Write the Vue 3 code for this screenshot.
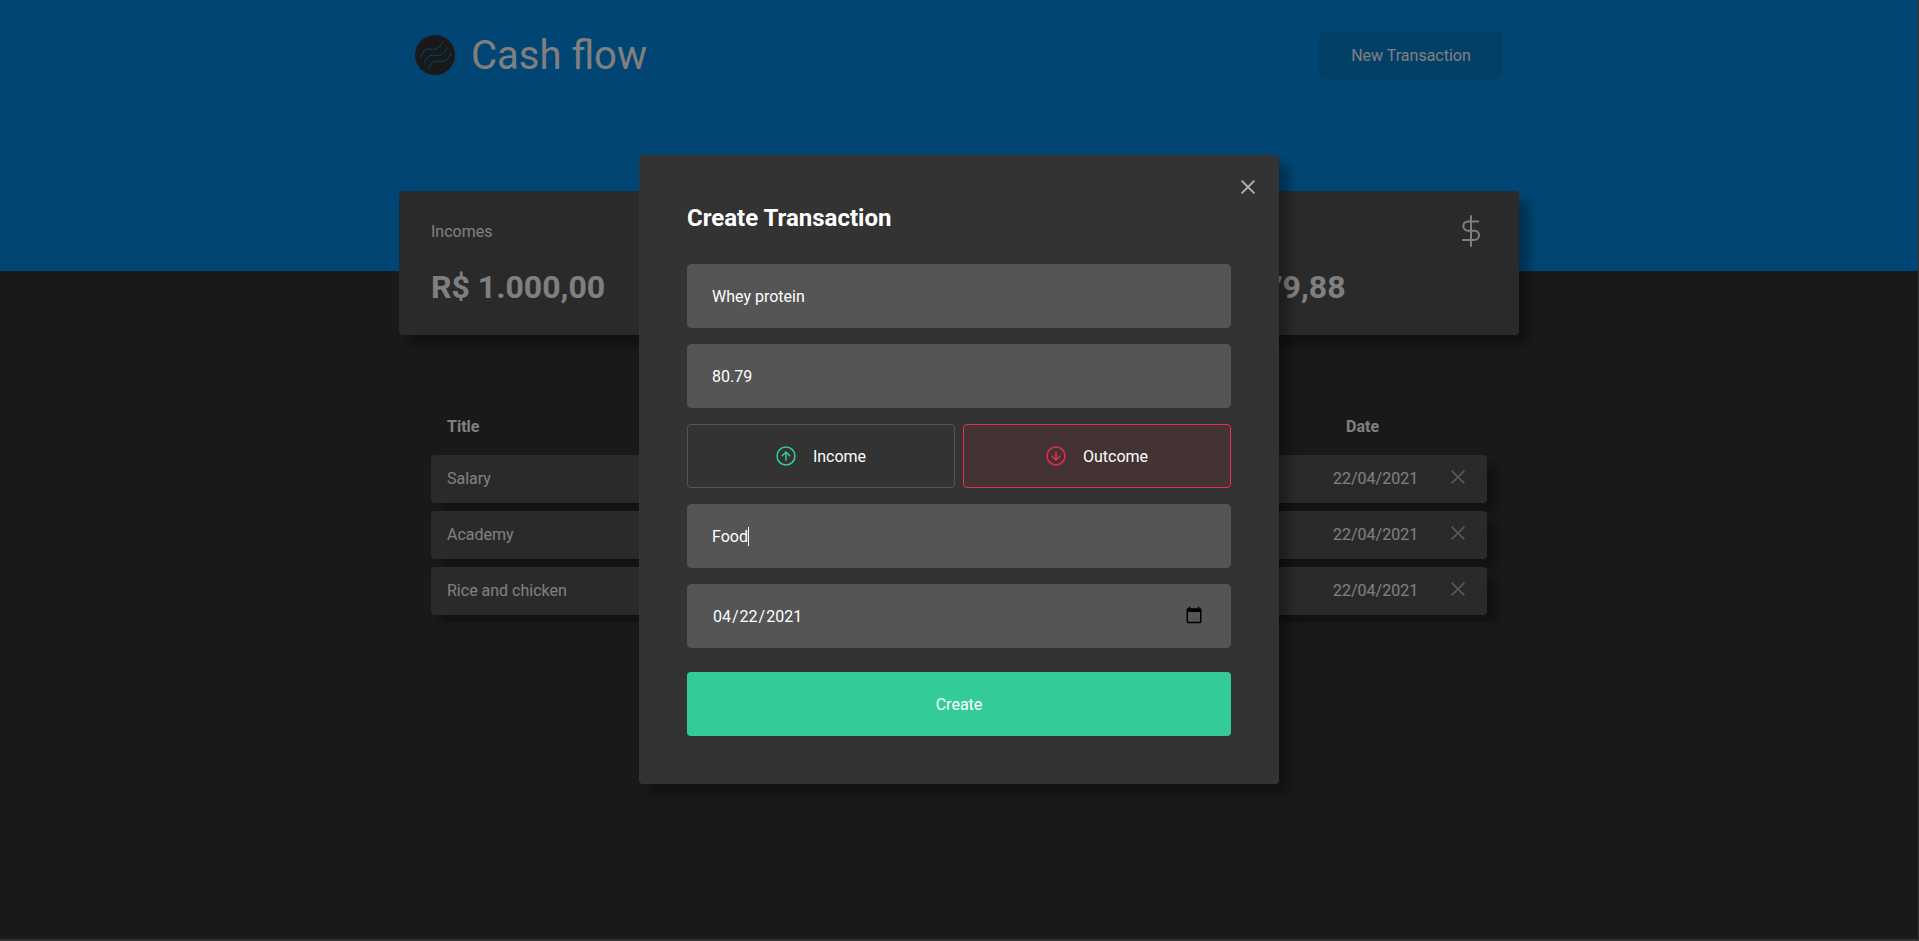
<script setup>
const cards = [
  { label: 'Incomes', value: 'R$ 1.000,00', icon: 'up' },
  { label: '', value: '', icon: 'down' },
  { label: 'Total', value: 'R$ 879,88', icon: 'dollar' },
]
const rows = [
  { title: 'Salary', date: '22/04/2021' },
  { title: 'Academy', date: '22/04/2021' },
  { title: 'Rice and chicken', date: '22/04/2021' },
]
</script>

<template>
  <div class="page">
    <header class="header">
      <div class="bar">
        <div class="brand">
          <svg class="logo" viewBox="0 0 40 40">
            <circle cx="20" cy="20" r="20" fill="#333" />
            <g fill="none" stroke="#008be6" stroke-width="1" stroke-linecap="round">
              <path d="M6 21.5C8 16 10.500 13.500 15 14.200C21 15 25 13.500 27.800 6.500" />
              <path d="M9.800 27.500C12 22 14.500 19.500 19 20.200C25 21 29 19.500 32 12.500" />
              <path d="M13.700 33.500C16 28 18.500 25.500 23 26.200C29 27 33 25.500 35.900 18.500" />
            </g>
          </svg>
          <span class="name">Cash flow</span>
        </div>
        <button class="new">New Transaction</button>
      </div>
    </header>

    <main class="main">
      <section class="cards">
        <article v-for="c in cards" :key="c.icon" class="card">
          <div class="card-top">
            <span>{{ c.label }}</span>
            <svg v-if="c.icon === 'dollar'" class="dollar" viewBox="0 0 32 32">
              <path d="M16 1V31M23.300 6.400H13a4.650 4.650 0 0 0 0 9.300h6.400a4.650 4.650 0 0 1 0 9.300H8" />
            </svg>
          </div>
          <strong>{{ c.value }}</strong>
        </article>
      </section>

      <section class="table">
        <div class="thead">
          <span>Title</span>
          <span class="th-date">Date</span>
        </div>
        <div v-for="r in rows" :key="r.title" class="row">
          <span>{{ r.title }}</span>
          <span class="date">{{ r.date }}</span>
          <svg class="x" viewBox="0 0 14 14"><path d="M.6 .6L13.400 13.400M13.400 .6L.6 13.400" /></svg>
        </div>
      </section>
    </main>

    <div class="overlay">
      <form class="modal" @submit.prevent>
        <button class="close" type="button" aria-label="Close">
          <svg class="x" viewBox="0 0 14 14"><path d="M.6 .6L13.400 13.400M13.400 .6L.6 13.400" /></svg>
        </button>
        <h2>Create Transaction</h2>
        <input class="field" type="text" value="Whey protein" />
        <input class="field" type="text" value="80.79" />
        <div class="types">
          <button type="button" class="type">
            <svg class="arrow in" viewBox="0 0 512 512">
              <path d="M448 256c0-106-86-192-192-192S64 150 64 256s86 192 192 192 192-86 192-192z" />
              <path d="M176 249.380L256 170l80 79.380M256 181.030V342" />
            </svg>
            <span>Income</span>
          </button>
          <button type="button" class="type active">
            <svg class="arrow out" viewBox="0 0 512 512">
              <path d="M448 256c0-106-86-192-192-192S64 150 64 256s86 192 192 192 192-86 192-192z" />
              <path d="M176 262.620L256 342l80-79.380M256 330.970V170" />
            </svg>
            <span>Outcome</span>
          </button>
        </div>
        <div class="field text">Food<i class="caret"></i></div>
        <input class="field" type="date" value="2021-04-22" />
        <button class="submit" type="submit">Create</button>
      </form>
    </div>
  </div>
</template>

<style>
body {
  margin: 0;
  background: #333;
  overflow: hidden;
}
</style>

<style scoped>
* {
  box-sizing: border-box;
}
.page {
  width: 1918px;
  height: 939px;
  position: relative;
  overflow: hidden;
  background: #333;
  color: #fff;
  font: 16px/19px Roboto, sans-serif;
}
button,
input {
  font: inherit;
  color: inherit;
  border: 0;
}
.header {
  height: 271px;
  background: #008be6;
  padding-top: 31px;
}
.bar {
  width: 1120px;
  height: 48px;
  margin: 0 auto;
  padding: 0 16px;
  display: flex;
  align-items: center;
  justify-content: space-between;
}
.brand {
  display: flex;
  align-items: center;
  gap: 16px;
}
.logo {
  width: 40px;
  height: 40px;
}
.name {
  font-size: 40px;
  line-height: 46px;
  padding-top: 2px;
}
.new {
  width: 184px;
  height: 48px;
  border-radius: 4px;
  background: rgba(51, 51, 51, 0.12);
}
.main {
  width: 1120px;
  margin: -80px auto 0;
}
.cards {
  display: grid;
  grid-template-columns: repeat(3, 1fr);
  gap: 32px;
}
.card {
  height: 144px;
  padding: 24px 32px 29px;
  display: flex;
  flex-direction: column;
  justify-content: space-between;
  background: #555;
  border-radius: 4px;
  box-shadow: 10px 10px 10px rgba(0, 0, 0, 0.3);
}
.card-top {
  height: 32px;
  display: flex;
  align-items: center;
  justify-content: space-between;
}
.card strong {
  font-size: 32px;
  line-height: 38px;
}
.dollar {
  width: 32px;
  height: 32px;
  fill: none;
  stroke: #fff;
  stroke-width: 2;
  stroke-linecap: round;
}
.table {
  margin-top: 64px;
  padding: 0 32px 8px;
  display: flex;
  flex-direction: column;
  gap: 8px;
  overflow: hidden;
}
.thead,
.row {
  display: grid;
  grid-template-columns: 886px 1fr 14px;
  align-items: center;
  height: 48px;
  padding: 0 22px 0 16px;
}
.thead {
  font-weight: 700;
  padding-top: 6px;
}
.th-date {
  padding-left: 13px;
}
.row {
  padding-bottom: 2px;
  background: #555;
  border-radius: 4px;
  box-shadow: 10px 10px 10px rgba(0, 0, 0, 0.3);
}
.x {
  display: block;
  width: 14px;
  height: 14px;
  fill: none;
  stroke: #aaa;
  stroke-width: 1.8;
}
.row .x {
  margin-bottom: 2px;
}
.overlay {
  position: absolute;
  inset: 0;
  display: flex;
  align-items: center;
  justify-content: center;
  background: rgba(0, 0, 0, 0.5);
}
.modal {
  position: relative;
  width: 640px;
  height: 629px;
  padding: 48px;
  display: flex;
  flex-direction: column;
  gap: 16px;
  background: #333;
  border-radius: 4px;
  box-shadow: 10px 10px 10px rgba(0, 0, 0, 0.3);
}
.close {
  position: absolute;
  top: 25px;
  right: 24px;
  padding: 0;
  background: none;
}
.close .x {
  stroke: #b5b5be;
}
h2 {
  margin: 1px 0 16px;
  font-size: 24px;
  line-height: 28px;
}
.field {
  width: 100%;
  height: 64px;
  flex: none;
  padding: 0 24px;
  background: #555;
  border: 1px solid #555;
  border-radius: 4px;
  outline: none;
}
.field::-webkit-calendar-picker-indicator {
  width: 18px;
  height: 18px;
  padding: 0;
  margin-right: 3px;
  margin-bottom: 2px;
  background-size: 18px 18px;
}
.text {
  display: flex;
  align-items: center;
}
.caret {
  width: 1px;
  height: 19px;
  background: #fff;
}
.types {
  display: grid;
  grid-template-columns: 1fr 1fr;
  gap: 8px;
}
.type {
  height: 64px;
  display: flex;
  align-items: center;
  justify-content: center;
  gap: 15px;
  padding: 0 8px 0 6px;
  background: transparent;
  border: 1px solid #555;
  border-radius: 4px;
}
.type.active {
  background: rgba(229, 46, 77, 0.1);
  border-color: #e52e4d;
}
.arrow {
  width: 24px;
  height: 24px;
  fill: none;
  stroke-width: 32;
  stroke-linecap: round;
  stroke-linejoin: round;
}
.in {
  stroke: #3c9;
}
.out {
  stroke: #e52e4d;
}
.submit {
  height: 64px;
  margin-top: 8px;
  background: #3c9;
  border-radius: 4px;
}
</style>
